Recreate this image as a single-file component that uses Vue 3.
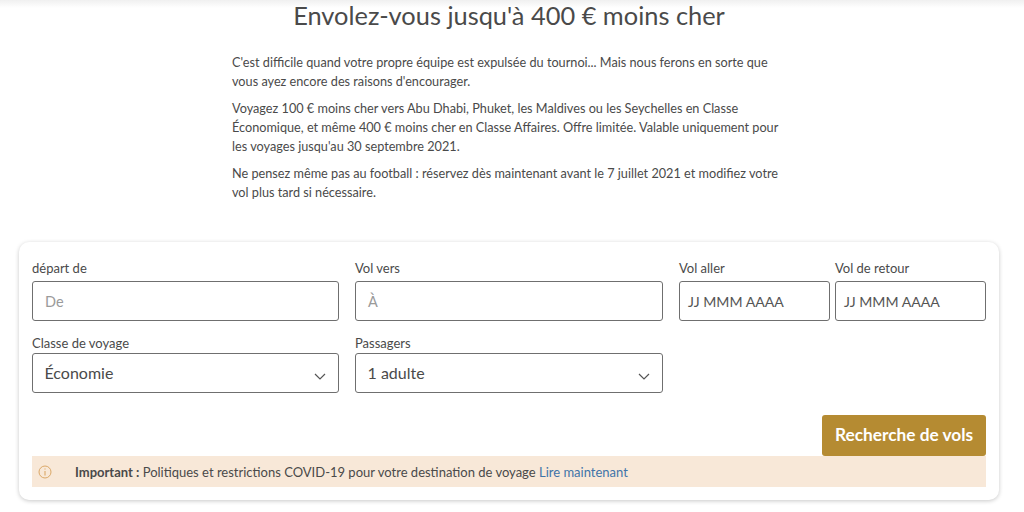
<script setup>
const paragraphs = [
  "C'est difficile quand votre propre équipe est expulsée du tournoi... Mais nous ferons en sorte que vous ayez encore des raisons d'encourager.",
  "Voyagez 100 € moins cher vers Abu Dhabi, Phuket, les Maldives ou les Seychelles en Classe Économique, et même 400 € moins cher en Classe Affaires. Offre limitée. Valable uniquement pour les voyages jusqu'au 30 septembre 2021.",
  "Ne pensez même pas au football : réservez dès maintenant avant le 7 juillet 2021 et modifiez votre vol plus tard si nécessaire.",
]
</script>

<template>
  <main class="page">
    <div class="top-shade"></div>
    <h1>Envolez-vous jusqu'à 400 € moins cher</h1>
    <section class="intro">
      <p v-for="(text, index) in paragraphs" :key="index">{{ text }}</p>
    </section>

    <section class="card">
      <div class="row first">
        <div class="field wide">
          <label>départ de</label>
          <div class="box placeholder">De</div>
        </div>
        <div class="field wide">
          <label>Vol vers</label>
          <div class="box placeholder">À</div>
        </div>
        <div class="dates">
          <div class="field date">
            <label>Vol aller</label>
            <div class="box date-box">JJ MMM AAAA</div>
          </div>
          <div class="field date">
            <label>Vol de retour</label>
            <div class="box date-box">JJ MMM AAAA</div>
          </div>
        </div>
      </div>

      <div class="row second">
        <div class="field wide">
          <label>Classe de voyage</label>
          <div class="box select">
            <span>Économie</span>
            <svg width="12" height="7" viewBox="0 0 12 7"><path d="M1 1l5 5 5-5" fill="none" stroke="#555" stroke-width="1.2" /></svg>
          </div>
        </div>
        <div class="field wide">
          <label>Passagers</label>
          <div class="box select">
            <span>1 adulte</span>
            <svg width="12" height="7" viewBox="0 0 12 7"><path d="M1 1l5 5 5-5" fill="none" stroke="#555" stroke-width="1.2" /></svg>
          </div>
        </div>
      </div>

      <div class="actions">
        <button type="button">Recherche de vols</button>
      </div>

      <div class="notice">
        <svg class="info" width="14" height="14" viewBox="0 0 14 14">
          <circle cx="7" cy="7" r="6" fill="none" stroke="#dba868" stroke-width="1" />
          <path d="M7 6v4.5M7 3.4v1.2" stroke="#dba868" stroke-width="1.1" fill="none" />
        </svg>
        <span><b>Important :</b> Politiques et restrictions COVID-19 pour votre destination de voyage <a>Lire maintenant</a></span>
      </div>
    </section>
  </main>
</template>

<style scoped>
.page {
  position: relative;
  width: 1024px;
  height: 512px;
  overflow: hidden;
  background: #fff;
  color: #4a4a4a;
  font-family: Lato, "Noto Sans", sans-serif;
}

.top-shade {
  position: absolute;
  top: 0;
  left: 0;
  right: 0;
  height: 8px;
  background: linear-gradient(#f0f0f0, #fff);
}

h1 {
  margin: 0;
  height: 44px;
  text-align: center;
  font-size: 25.4px;
  line-height: 30.5px;
  font-weight: 400;
  color: #4a4a4a;
  position: relative;
  left: -3px;
}

.intro {
  width: 552px;
  margin: 8.5px 0 0 232px;
  font-size: 12.7px;
  line-height: 19px;
}

.intro p {
  margin: 0 0 8px;
}

.card {
  position: absolute;
  top: 242px;
  left: 19px;
  width: 980px;
  height: 258px;
  box-sizing: border-box;
  padding: 17px 13px 0;
  background: #fff;
  border-radius: 10px;
  box-shadow: 0 1px 4px rgba(0, 0, 0, 0.22);
}

.row {
  display: flex;
  gap: 16px;
}

.second {
  margin-top: 13px;
}

.field.wide {
  width: 308px;
}

.field.wide:first-child {
  width: 307px;
}

.dates {
  display: flex;
  gap: 5px;
}

.date {
  width: 151px;
}

label {
  display: block;
  height: 22px;
  font-size: 13px;
  line-height: 18px;
  color: #4a4a4a;
}

.second label {
  height: 19px;
}

.box {
  box-sizing: border-box;
  height: 40px;
  display: flex;
  align-items: center;
  border: 1px solid #6f6f6f;
  border-radius: 3px;
  padding: 0 12px;
  font-size: 16px;
}

.placeholder {
  color: #9a9a9a;
  font-size: 14.5px;
}

.date-box {
  padding: 0 8px;
  font-size: 14.1px;
  color: #555;
}

.select {
  justify-content: space-between;
  font-size: 16px;
  padding: 0 12px 2px 11.5px;
}

.select svg {
  margin-top: 8px;
}

.actions {
  display: flex;
  justify-content: flex-end;
  margin-top: 22px;
}

button {
  width: 164px;
  height: 41px;
  border: 0;
  border-radius: 3px;
  padding: 0 0 2px;
  background: #b58b32;
  color: #fff;
  font-family: inherit;
  font-size: 17.3px;
  font-weight: 700;
}

.notice {
  display: flex;
  align-items: center;
  height: 31px;
  padding-left: 6px;
  background: #f8e8d8;
  font-size: 13px;
}

.info {
  margin-right: 23px;
}

.notice b {
  font-weight: 700;
}

.notice a {
  color: #3f74a8;
}
</style>
